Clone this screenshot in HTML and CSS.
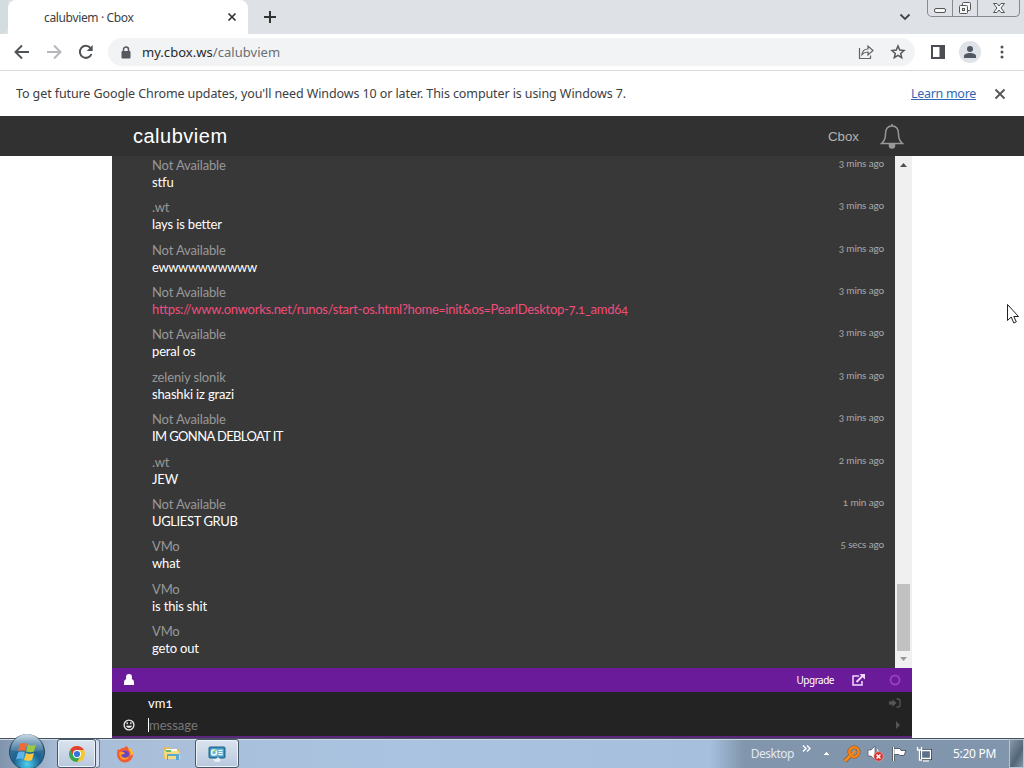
FILE: index.html
```html
<!DOCTYPE html>
<html lang="en">
<head>
    <meta charset="utf-8">
    <title>calubviem · Cbox</title>
    <link rel="stylesheet" href="styles.css">
</head>
<body>
    <div class="tabstrip">
        <div class="tab-edge"></div>
        <div class="tab">
            <span>calubviem · Cbox</span>
            <svg width="10" height="10" viewBox="0 0 10 10"><path d="M1.5 1.5l7 7M8.5 1.5l-7 7" stroke="#333" stroke-width="1.7"/></svg>
        </div>
        <div class="tab-rest">
            <svg width="14" height="14" viewBox="0 0 14 14"><path d="M7 1v12M1 7h12" stroke="#333" stroke-width="2"/></svg>
            <svg class="chevron" width="12" height="8" viewBox="0 0 12 8"><path d="M1.5 1.5L6 6l4.500-4.500" fill="none" stroke="#444" stroke-width="1.8"/></svg>
            <div class="window-buttons">
                <div class="win-btn"><svg width="14" height="16" viewBox="0 0 14 16"><rect x="1.500" y="8.500" width="11" height="4" rx="1.500" fill="#f5f6f8" stroke="#555"/></svg></div>
                <div class="win-btn"><svg width="14" height="16" viewBox="0 0 14 16" fill="#f5f6f8" stroke="#555"><rect x="4.500" y="2.500" width="8" height="8" rx="1"/><rect x="1.500" y="5.500" width="8" height="8" rx="1"/><rect x="4.500" y="8.500" width="2" height="2"/></svg></div>
                <div class="win-btn wide"><svg width="14" height="16" viewBox="0 0 14 16"><path d="M1.500 3.500h3.500l2 2.500 2-2.500h3.500L9 8l3.500 4.500H9L7 10l-2 2.500H1.500L5 8z" fill="#f5f6f8" stroke="#555"/></svg></div>
            </div>
        </div>
    </div>

    <div class="toolbar">
        <svg width="16" height="16" viewBox="0 0 16 16"><path d="M15 8H2M8 1.500L1.500 8 8 14.500" fill="none" stroke="#505356" stroke-width="1.900"/></svg>
        <svg width="16" height="16" viewBox="0 0 16 16"><path d="M1 8h13M8 1.500L14.500 8 8 14.500" fill="none" stroke="#b5b7ba" stroke-width="1.900"/></svg>
        <svg width="16" height="16" viewBox="0 0 16 16"><path d="M13.500 10A6 6 0 1 1 12.500 4" fill="none" stroke="#505356" stroke-width="2"/><path d="M14.700 1v6H8.700z" fill="#505356"/></svg>
        <div class="address">
            <svg width="10" height="13" viewBox="0 0 10 13"><path d="M2.500 6V3.500a2.500 2.500 0 0 1 5 0V6" fill="none" stroke="#55585c" stroke-width="1.500"/><rect x=".5" y="5" width="9" height="7.500" rx="1" fill="#55585c"/></svg>
            <span class="url">my.cbox.ws<span class="path">/calubviem</span></span>
            <svg class="share" width="16" height="16" viewBox="0 0 16 16" fill="none" stroke="#606367" stroke-width="1.200"><path d="M1.500 4v10.500h11V11.500"/><path d="M4 10.500c.5-4 2.500-5.500 6-5.500V2l5 4.500-5 4.500V8c-3 0-4.500.7-6 2.500z"/></svg>
            <svg width="16" height="16" viewBox="0 0 16 16"><path d="M8 2l1.700 4.100 4.300.4-3.300 2.900 1 4.300L8 11.400l-3.700 2.300 1-4.300L2 6.500l4.300-.4z" fill="none" stroke="#55585c" stroke-width="1.500"/></svg>
        </div>
        <svg class="panel-icon" width="14" height="14" viewBox="0 0 14 14"><rect x="1" y="1" width="12" height="12" fill="none" stroke="#4a4d51" stroke-width="2"/><rect x="8.500" y="1" width="5" height="12" fill="#4a4d51"/></svg>
        <div class="avatar"><svg width="14" height="14" viewBox="0 0 14 14" fill="#505863"><circle cx="7" cy="4" r="3"/><path d="M1 13v-2c0-2 3-3 6-3s6 1 6 3v2z"/></svg></div>
        <svg class="dots" width="4" height="14" viewBox="0 0 4 14" fill="#505356"><circle cx="2" cy="2" r="1.500"/><circle cx="2" cy="7" r="1.500"/><circle cx="2" cy="12" r="1.500"/></svg>
    </div>

    <div class="infobar">
        <span class="notice">To get future Google Chrome updates, you'll need Windows 10 or later. This computer is using Windows 7.</span>
        <a class="learn" href="#">Learn more</a>
        <svg width="12" height="12" viewBox="0 0 12 12"><path d="M1.500 1.500l9 9M10.500 1.500l-9 9" stroke="#555" stroke-width="1.800"/></svg>
    </div>

    <div class="site-header">
        <span class="site-name">calubviem</span>
        <span class="site-link">Cbox</span>
        <svg width="24" height="26" viewBox="0 0 24 26" fill="none" stroke="#999" stroke-width="1.500"><path d="M12 3C7 3 5.500 7 5.500 11c0 5-1.500 7.500-4 9.500h21c-2.500-2-4-4.500-4-9.500 0-4-1.500-8-6.500-8z"/><path d="M9.500 21v1.500a2.500 2.500 0 0 0 5 0V21" fill="#999"/><path d="M12 1v2"/></svg>
    </div>

    <div class="page">
        <div class="cbox">
            <div class="feed">
                <div class="messages">
                    <div class="msg"><div class="time">3 mins ago</div><div class="name">Not Available</div><div class="text">stfu</div></div>
                    <div class="msg"><div class="time">3 mins ago</div><div class="name">.wt</div><div class="text">lays is better</div></div>
                    <div class="msg"><div class="time">3 mins ago</div><div class="name">Not Available</div><div class="text tight">ewwwwwwwwww</div></div>
                    <div class="msg"><div class="time">3 mins ago</div><div class="name">Not Available</div><div class="text"><a class="link" href="#">https://www.onworks.net/runos/start-os.html?home=init&amp;os=PearlDesktop-7.1_amd64</a></div></div>
                    <div class="msg"><div class="time">3 mins ago</div><div class="name">Not Available</div><div class="text">peral os</div></div>
                    <div class="msg"><div class="time">3 mins ago</div><div class="name">zeleniy slonik</div><div class="text">shashki iz grazi</div></div>
                    <div class="msg"><div class="time">3 mins ago</div><div class="name">Not Available</div><div class="text caps">IM GONNA DEBLOAT IT</div></div>
                    <div class="msg"><div class="time">2 mins ago</div><div class="name">.wt</div><div class="text">JEW</div></div>
                    <div class="msg"><div class="time">1 min ago</div><div class="name">Not Available</div><div class="text tight">UGLIEST GRUB</div></div>
                    <div class="msg"><div class="time">5 secs ago</div><div class="name">VMo</div><div class="text">what</div></div>
                    <div class="msg"><div class="name">VMo</div><div class="text">is this shit</div></div>
                    <div class="msg"><div class="name">VMo</div><div class="text">geto out</div></div>
                </div>
                <div class="scrollbar">
                    <svg width="7" height="4" viewBox="0 0 7 4"><path d="M0 4L3.500 0 7 4z" fill="#505050"/></svg>
                    <div class="thumb"></div>
                    <svg width="7" height="4" viewBox="0 0 7 4"><path d="M0 0h7L3.500 4z" fill="#999"/></svg>
                </div>
            </div>
            <div class="actions">
                <svg width="10" height="12" viewBox="0 0 10 12" fill="#fff"><ellipse cx="5" cy="3.400" rx="3" ry="3.300"/><path d="M0 11V8.500C0 6.500 1 5.300 2.500 5h5C9 5.300 10 6.500 10 8.500V11z"/></svg>
                <span class="upgrade">Upgrade</span>
                <svg width="13" height="12" viewBox="0 0 13 12" fill="none" stroke="#f3d9ff" stroke-width="1.500"><path d="M7 2H1v9h9V7"/><path d="M4.500 8L11 1.500" stroke-width="2"/><path d="M7.500 0H13v5.500z" fill="#f3d9ff" stroke="none"/></svg>
                <svg class="ring" width="12" height="12" viewBox="0 0 12 12"><circle cx="6" cy="6" r="4.500" fill="none" stroke="#953dbb" stroke-width="2"/></svg>
            </div>
            <div class="form">
                <div class="form-row">
                    <span class="form-icon"></span>
                    <span class="nick">vm1</span>
                    <svg width="12" height="10" viewBox="0 0 12 10"><path d="M0 5l4-4v2.300h3.500v3.400H4V9z" transform="matrix(-1 0 0 1 7.500 0)" fill="#555"/><path d="M7.500 1H9a2 2 0 0 1 2 2v4a2 2 0 0 1-2 2H7.500" fill="none" stroke="#555" stroke-width="1.300"/></svg>
                </div>
                <div class="form-row">
                    <span class="form-icon"><svg width="12" height="12" viewBox="0 0 12 12" fill="none" stroke="#eee" stroke-width="1.300"><circle cx="6" cy="6" r="4.900"/><path d="M3 6.800c.7 2.700 5.300 2.700 6 0z" fill="#eee" stroke="none"/><path d="M4.200 3.200v2M7.800 3.200v2"/></svg></span>
                    <span class="message">message</span>
                    <svg width="6" height="8" viewBox="0 0 6 8"><path d="M1 0l4 4-4 4z" fill="#555"/></svg>
                </div>
            </div>
        </div>
    </div>

    <div class="taskbar">
        <div class="start">
            <svg width="40" height="38" viewBox="0 0 40 38">
                <defs>
                    <radialGradient id="orb" cx=".5" cy=".85" r=".85"><stop offset="0" stop-color="#4ed0ee"/><stop offset=".45" stop-color="#1b6292"/><stop offset="1" stop-color="#547d9c"/></radialGradient>
                    <linearGradient id="gloss" x2="0" y2="1"><stop stop-color="#e3eef5" stop-opacity=".85"/><stop offset="1" stop-color="#90b0c6" stop-opacity=".2"/></linearGradient>
                </defs>
                <circle cx="20" cy="19" r="17.500" fill="url(#orb)" stroke="#28465c"/>
                <path d="M4 17a16 16 0 0 1 32 0c-9 3-23 3-32 0z" fill="url(#gloss)"/>
                <path d="M13 11c3-1.500 5.500-1 7 0l-2 7c-2-1-4-1-7 0z" fill="#ef6a35"/>
                <path d="M21 11.500c3 1.500 5 1 8 0l-2 7c-3 1-5 1-8 0z" fill="#9cc645"/>
                <path d="M11 19.500c3-1.500 5-1 7 0l-2 7c-2-1.500-4-1-7 0z" fill="#60b3eb"/>
                <path d="M19 20c3 1.500 5 1 8 0l-2 7c-3 1.200-5 1-8 0z" fill="#ffc83b"/>
            </svg>
        </div>
        <div class="task chrome active">
            <svg width="18" height="18" viewBox="0 0 18 18"><circle cx="9" cy="9" r="8" fill="#f4c831"/><path d="M2.100 5A8 8 0 0 1 15.900 5H9a4 4 0 0 0-3.500 6z" fill="#df4035"/><path d="M2.100 5A8 8 0 0 0 9 17l3.500-6a4 4 0 0 1-7 0z" fill="#35a653"/><circle cx="9" cy="9" r="4" fill="#fff"/><circle cx="9" cy="9" r="3.100" fill="#3476dc"/></svg>
        </div>
        <div class="stack"></div>
        <div class="task firefox">
            <svg width="18" height="18" viewBox="0 0 18 18"><path d="M2 4l1.500 1C5 3 7 3 8 3l2-2c2 1 2 2 3 3l1-1c2 2 3 4 3 6a8 8 0 0 1-16 1c0-2 0-4 1-6z" fill="#f35d36"/><path d="M10 1c2 1 2 2 3 4 2 2 2 4 1 6l3-2c0-2-1-4-3-6l-1 1c-1-1-1-2-3-3z" fill="#ffc62f"/><circle cx="9" cy="9.500" r="4" fill="#6845c5"/><path d="M3 8c2-2 4-1 6 0-1 2-3 1-4 2 1 3 5 4 8 1-1 5-9 6-10-3z" fill="#ff9b22"/></svg>
        </div>
        <div class="task explorer">
            <svg width="18" height="17" viewBox="0 0 18 17"><path d="M1 2h6l1 2h8v10H1z" fill="#dfbd5b"/><path d="M3 4h11v6H3z" fill="#fff"/><path d="M1 6h15l1 8H2z" fill="#f5dc83"/><path d="M3 5h5v2H3z" fill="#6db86b"/><path d="M5 15v-4h8v4h3V9H4v6z" fill="#57a9d5"/></svg>
        </div>
        <div class="task panel active">
            <svg width="18" height="18" viewBox="0 0 18 18"><rect x="1" y="2" width="16" height="11" rx="1" fill="#2c83b5" stroke="#276588"/><rect x="2.500" y="3.500" width="13" height="8" fill="#69b6d8"/><circle cx="6" cy="7.500" r="2.500" fill="none" stroke="#eff8f2" stroke-width="1.500"/><path d="M6 7.500V5h2.500" fill="#8acc67"/><path d="M10.500 5.500h4M10.500 7.500h4M10.500 9.500h4" stroke="#fff"/><path d="M5 14h3l2-2 3 3-2 2H7z" fill="#e8edf2"/></svg>
        </div>
        <div class="tray">
            <span class="desktop-label">Desktop</span>
            <svg class="more" width="9" height="7" viewBox="0 0 9 7"><path d="M1 .5l3 3-3 3M5 .5l3 3-3 3" fill="none" stroke="#fff" stroke-width="1.400"/></svg>
            <svg class="up" width="9" height="5" viewBox="0 0 9 5"><path d="M.5 4.500l4-4 4 4z" fill="#fff" stroke="#596c80" stroke-width=".5"/></svg>
            <svg class="search" width="18" height="18" viewBox="0 0 18 18" fill="none"><path d="M7 11l-5 5" stroke="#864612" stroke-width="4"/><circle cx="11" cy="7" r="4.700" stroke="#9b4d0c" stroke-width="3.600"/><path d="M7 11l-5 5" stroke="#f28b20" stroke-width="3"/><circle cx="11" cy="7" r="4.700" stroke="#f5861a" stroke-width="2.500"/><path d="M8.500 9.500L12 6" stroke="#f5861a" stroke-width="2"/></svg>
            <svg class="sound" width="17" height="17" viewBox="0 0 17 17"><path d="M1 5h3l4-4v14l-4-4H1z" fill="#fff" stroke="#59626c" stroke-width=".8"/><path d="M10 4c1 1 1 2 1 4" fill="none" stroke="#fff"/><circle cx="11.500" cy="11.500" r="4.700" fill="#d92f2b" stroke="#f2b4ae" stroke-width=".6"/><path d="M9.500 9.500l4 4M13.500 9.500l-4 4" stroke="#fff" stroke-width="1.500"/></svg>
            <svg class="flag" width="16" height="16" viewBox="0 0 16 16"><path d="M2.500 1v14" stroke="#333d48" stroke-width="3"/><path d="M3 2.500h6l1 2h5l-2 5H9l-1-1H3z" fill="#fff" stroke="#3d4853" stroke-width=".8"/><path d="M2.500 1v14" stroke="#fff" stroke-width="1.400"/></svg>
            <svg class="network" width="16" height="16" viewBox="0 0 16 16" fill="none"><path d="M5.500 4.500h9v8h-9zM7 15h6" stroke="#303b47" stroke-width="3"/><path d="M5.500 4.500h9v8h-9z" fill="#59718a" stroke="#fff" stroke-width="1.300"/><path d="M7 15h6M1.500 1v3h4V1M3.500 4v10H6" stroke="#fff" stroke-width="1.300"/></svg>
            <span class="clock">5:20 PM</span>
            <div class="show-desktop"></div>
        </div>
    </div>

    <svg class="cursor" width="14" height="22" viewBox="0 0 14 22"><path d="M1.500 1.500v16l3.700-3.500 2.600 6 2.500-1.200-2.500-5.300h4.700z" fill="#fff" stroke="#222"/></svg>
</body>
</html>
```
FILE: styles.css
```css
* { box-sizing: border-box; }
body { margin: 0; width: 1024px; height: 768px; overflow: hidden; display: flex; flex-direction: column; background: #fff; font-family: "Noto Sans", "Open Sans", sans-serif; font-size: 13px; color: #3c4043; }
svg { display: block; flex: none; }

.tabstrip { display: flex; height: 34px; flex: none; background: #dee1e6; }
.tab-edge { width: 8px; background: #d3dcdf; border-radius: 0 0 7px 0; }
.tab { width: 240px; display: flex; align-items: center; justify-content: space-between; padding: 0 11px 0 36px; background: #fff; border-radius: 8px 8px 0 0; font-size: 12px; letter-spacing: -0.35px; }
.tab-rest { flex: 1; display: flex; align-items: center; padding-left: 15px; border-radius: 0 0 0 8px; }
.chevron { margin-left: auto; margin-right: 16px; }
.window-buttons { display: flex; align-self: flex-start; height: 17px; margin-right: 4px; border: 1px solid #858990; border-top: 0; border-radius: 0 0 5px 5px; }
.win-btn { width: 25px; display: flex; justify-content: center; border-right: 1px solid #858990; }
.win-btn.wide { width: 41px; border: 0; }

.toolbar { display: flex; align-items: center; height: 37px; flex: none; padding: 0 20px 0 14px; gap: 16px; border-bottom: 1px solid #d8d9db; }
.address { width: 807px; height: 28px; margin-left: -2px; padding: 0 9px 0 13px; display: flex; align-items: center; gap: 16px; border-radius: 14px; background: #f1f3f4; }
.url { margin-left: -5px; color: #27292c; letter-spacing: 0.04px; }
.path { color: #6b6e72; }
.share { margin-left: auto; }
.avatar { width: 22px; height: 22px; display: flex; align-items: center; justify-content: center; border-radius: 50%; background: #dfe3e9; margin-left: -2px; }
.dots { margin-left: auto; }

.infobar { display: flex; align-items: center; height: 45px; flex: none; padding: 0 18px 0 16px; background: #fff; font-size: 12.5px; letter-spacing: -0.1px; }
.learn { margin-left: auto; margin-right: 18px; color: #3268b5; letter-spacing: -0.3px; }

.site-header { display: flex; align-items: center; height: 40px; flex: none; padding: 0 120px 0 133px; background: #313131; font-family: "Liberation Sans", Arial, sans-serif; }
.site-name { font-size: 20px; letter-spacing: 0.5px; color: #fff; }
.site-link { margin-left: auto; margin-right: 21px; font-size: 13.3px; color: #b3b3b3; }

.page { height: 583px; flex: none; padding: 0 112px; }
.cbox { height: 100%; display: flex; flex-direction: column; background: #5b267c; font-family: Lato, "Open Sans", sans-serif; font-variant-numeric: oldstyle-nums; }
.feed { display: flex; height: 512px; flex: none; background: #383838; }
.messages { flex: 1; padding: 1px 11px 0 40px; }
.msg { height: 42.36px; line-height: 17px; letter-spacing: -0.15px; }
.time { float: right; font-size: 10px; line-height: 13px; color: #aaa; }
.name { color: #989898; }
.text { color: #fff; }
.tight { letter-spacing: -0.38px; }
.caps { letter-spacing: -0.62px; }
.link { color: #f04d7c; text-decoration: none; letter-spacing: -0.27px; }
.scrollbar { width: 17px; display: flex; flex-direction: column; align-items: center; padding: 7px 0; background: #f0f0f0; }
.thumb { width: 13px; height: 67px; margin-top: auto; margin-bottom: 6px; background: #c1c1c1; }

.actions { height: 24px; flex: none; display: flex; align-items: center; padding: 0 11px 0 12px; background: #6a1b9a; }
.upgrade { margin-left: auto; margin-right: 18px; font: 10px "Noto Sans", sans-serif; letter-spacing: -0.5px; color: #fff; }
.ring { margin-left: 24px; }
.form { height: 44px; flex: none; padding-right: 11px; background: #232323; }
.form-row { height: 22px; display: flex; align-items: center; justify-content: space-between; }
.form-icon { width: 36px; padding-left: 11px; }
.nick { flex: 1; color: #fff; }
.message { flex: 1; color: #777; border-left: 1px solid #fff; line-height: 14px; }

.taskbar { position: relative; height: 30px; flex: none; margin-top: -1px; display: flex; background: linear-gradient(90deg, #8194ad 0, #a9bdd7 60px, #a9c3e0 400px, #a5bfdc 710px, #8195ac 745px, #8195ac 100%); border-top: 1px solid #47525e; box-shadow: inset 0 1px #cbd9e7; }
.start { width: 57px; padding-left: 7px; margin-top: -6px; }
.task { display: flex; align-items: center; justify-content: center; }
.task.active { border: 1px solid #46566a; border-radius: 3px; background: linear-gradient(#dbe4ef, #b7c8dd); box-shadow: inset 0 0 0 1px #edf3f8; }
.chrome { width: 39px; }
.stack { width: 4px; border: 1px solid #697c94; border-left: 0; border-radius: 0 3px 3px 0; background: #d2deeb; }
.firefox { width: 49px; }
.explorer { width: 46px; }
.panel { width: 44px; }
.tray { margin-left: auto; display: flex; align-items: center; color: #fff; font-size: 12px; }
.desktop-label { color: #e1e8f1; letter-spacing: -0.5px; }
.more { margin: -11px 11px 0 8px; }
.search { margin: 0 6px 0 12px; }
.sound { margin-right: 7px; }
.flag { margin-right: 9px; }
.network { margin-right: 21px; }
.clock { letter-spacing: -0.3px; }
.show-desktop { align-self: stretch; width: 15px; margin-left: 13px; border: 1px solid #b8c4d1; background: linear-gradient(120deg, #8b9aaa, #526577 60%, #8396a9); }

.cursor { position: absolute; left: 1006px; top: 303px; }
```
